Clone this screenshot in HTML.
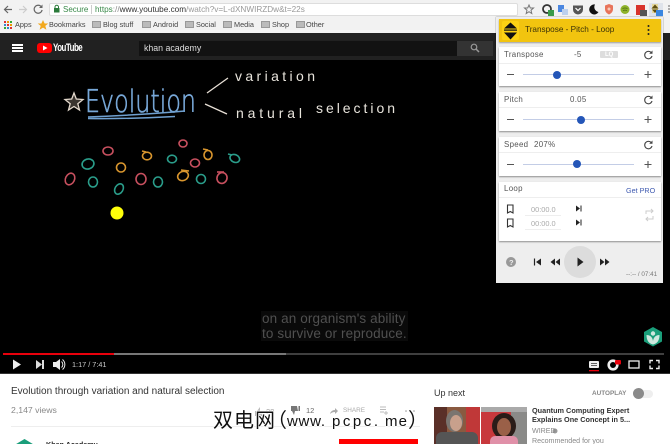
<!DOCTYPE html>
<html>
<head>
<meta charset="utf-8">
<style>
html,body{margin:0;padding:0;background:#fff}
#p{position:relative;width:670px;height:444px;overflow:hidden;font-family:"Liberation Sans","Noto Sans CJK SC",sans-serif;background:#fff}
.a{position:absolute}
.t{position:absolute;white-space:nowrap;line-height:1}
.card{position:absolute;left:499px;width:162px;background:#fff;box-shadow:0 1px 1.5px rgba(0,0,0,.4)}
.div{position:absolute;left:499px;width:162px;height:1px;background:#eee}
.lbl{position:absolute;white-space:nowrap;line-height:1;font-size:7.9px;color:#555;letter-spacing:.3px}
.track{position:absolute;left:523px;width:111px;height:1px;background:#c3cde6}
.thumb{position:absolute;width:8px;height:8px;border-radius:50%;background:#2456b8}
.bm{position:absolute;top:20.500px;font-size:7.300px;color:#444;line-height:1;white-space:nowrap}
.fd{position:absolute;top:21px;width:9px;height:7px;background:#bbb;border:1px solid #999;box-sizing:border-box}
svg{position:absolute;overflow:visible}
</style>
</head>
<body>
<div id="p">
<!-- chrome -->
<div class="a" style="left:0;top:0;width:670px;height:33px;background:#f2f2f2"></div>
<div class="a" style="left:49px;top:3px;width:469px;height:13px;background:#fff;border:1px solid #ddd;box-sizing:border-box;border-radius:2px"></div>
<svg style="left:0;top:0" width="670" height="33" viewBox="0 0 670 33">
<path d="M12 9.500H5M8 6L4.500 9.500 8 13" fill="none" stroke="#666" stroke-width="1.200"/>
<path d="M19 9.500h7M23 6l3.500 3.500L23 13" fill="none" stroke="#ccc" stroke-width="1.200"/>
<path d="M41.500 7a4 4 0 1 0 .6 3" fill="none" stroke="#666" stroke-width="1.200"/><path d="M42.500 4.500v3.500h-3.500z" fill="#666"/>
<rect x="54" y="8" width="5.500" height="4.500" fill="#2a7a3a"/><path d="M55 8V7a1.700 1.700 0 0 1 3.500 0v1" fill="none" stroke="#2a7a3a"/>
<path d="M529 5l1.300 3h3.200l-2.500 2.200.8 3.300-2.800-1.800-2.800 1.800.8-3.300-2.500-2.200h3.200z" fill="none" stroke="#777"/>
<circle cx="547" cy="9" r="4" fill="none" stroke="#333" stroke-width="1.800"/><rect x="548" y="10" width="6" height="6" fill="#3a9a4a"/>
<rect x="558" y="5" width="6" height="7" fill="#4a86e0"/><rect x="562" y="9" width="6" height="6" fill="#bcd0ee"/>
<path d="M573 5.500h10v4a5 5 0 0 1-10 0z" fill="#555"/><path d="M575.500 8l2.500 2.500L580.500 8" fill="none" stroke="#fff" stroke-width="1.200"/>
<path d="M595 4.500a5 5 0 1 0 3.500 7.500 5 5 0 0 1-3.500-7.500z" fill="#111"/>
<path d="M605 5.500l4-1.500 4 1.500v3.500c0 3-2 4.500-4 5.500-2-1-4-2.500-4-5.500z" fill="#e8745a"/><circle cx="609" cy="9" r="1.500" fill="#f6c8b8"/>
<circle cx="625" cy="9.500" r="4.500" fill="#8fb32a"/><path d="M622.500 8.500q2.500-1 5 0M623 10.500q2-.7 4 0" stroke="#4a6a10" fill="none" stroke-width=".7"/>
<rect x="636" y="5" width="9" height="5" fill="#d8332a"/><rect x="636" y="10" width="4" height="5" fill="#d8332a"/><rect x="640" y="10" width="7" height="6" fill="#555"/>
<rect x="649" y="3" width="14" height="14" fill="#dfe3ea"/><path d="M655 4.500l3.500 4h-7zM655 13l3-3.500h-6z" fill="#111"/><rect x="652" y="4" width="6" height="9" fill="#f2c40f" opacity=".35"/><rect x="656" y="10" width="7" height="6" fill="#3a86e0"/>
<path d="M668 6h2M668 9h2M668 12h2" stroke="#666"/>
<g><rect x="4" y="21" width="2" height="2" fill="#d33"/><rect x="7" y="21" width="2" height="2" fill="#e90"/><rect x="10" y="21" width="2" height="2" fill="#3a3"/><rect x="4" y="24" width="2" height="2" fill="#38c"/><rect x="7" y="24" width="2" height="2" fill="#d33"/><rect x="10" y="24" width="2" height="2" fill="#e90"/><rect x="4" y="27" width="2" height="2" fill="#3a3"/><rect x="7" y="27" width="2" height="2" fill="#38c"/><rect x="10" y="27" width="2" height="2" fill="#d33"/></g>
<path d="M43 20l1.600 3.500h3.700l-3 2.400 1.100 3.800-3.400-2.100-3.400 2.100 1.100-3.800-3-2.400h3.700z" fill="#f2a81d"/>
</svg>
<div class="t" style="left:63px;top:5.500px;font-size:8px;color:#3a8a4a">Secure</div>
<div class="a" style="left:91px;top:5px;width:1px;height:9px;background:#ccc"></div>
<div class="t" style="left:95px;top:5.500px;font-size:8.200px;color:#999"><span style="color:#3a8a4a">https</span><span style="color:#888">://</span><span style="color:#333">www.youtube.com</span>/watch?v=L-dXNWIRZDw&amp;t=22s</div>
<div class="bm" style="left:15px">Apps</div>
<div class="bm" style="left:49px">Bookmarks</div>
<div class="fd" style="left:92px"></div><div class="bm" style="left:103px">Blog stuff</div>
<div class="fd" style="left:142px"></div><div class="bm" style="left:153px">Android</div>
<div class="fd" style="left:185px"></div><div class="bm" style="left:196px">Social</div>
<div class="fd" style="left:223px"></div><div class="bm" style="left:234px">Media</div>
<div class="fd" style="left:261px"></div><div class="bm" style="left:272px">Shop</div>
<div class="fd" style="left:296px"></div><div class="bm" style="left:306px">Other</div>

<!-- masthead -->
<div class="a" style="left:0;top:33px;width:670px;height:27px;background:#212121"></div>
<div class="a" style="left:12px;top:44px;width:11px;height:8px;background:linear-gradient(#fff 0 2px,transparent 2px 3px,#fff 3px 5px,transparent 5px 6px,#fff 6px 8px)"></div>
<div class="a" style="left:37px;top:43px;width:15px;height:10px;background:#f00;border-radius:3px"></div>
<svg style="left:0;top:0" width="60" height="60"><path d="M43 45.500l4.500 2.500-4.500 2.500z" fill="#fff"/></svg>
<div class="t" style="left:53px;top:43px;font-size:11px;font-weight:bold;color:#fff;letter-spacing:-.7px;transform-origin:left;transform:scaleX(.72)">YouTube</div>
<div class="a" style="left:139px;top:41px;width:318px;height:15px;background:#121212"></div>
<div class="t" style="left:144px;top:44px;font-size:8.800px;color:#ddd">khan academy</div>
<div class="a" style="left:457px;top:41px;width:36px;height:15px;background:#333"></div>
<svg style="left:0;top:0" width="670" height="60"><circle cx="474" cy="47" r="2.800" fill="none" stroke="#999" stroke-width="1.200"/><path d="M476 49l3 3" stroke="#999" stroke-width="1.500"/></svg>

<!-- video -->
<div class="a" style="left:0;top:60px;width:670px;height:314px;background:#000"></div>
<svg style="left:0;top:0" width="670" height="444" viewBox="0 0 670 444">
<path d="M74 93l2.300 6 6.700.500-5.200 4.200 1.700 6.300-5.500-3.500-5.500 3.500 1.700-6.300-5.200-4.200 6.700-.500z" fill="#3a3530" stroke="#e3d8cc" stroke-width="1.300"/>
<text x="85" y="112" font-family="'DejaVu Sans',sans-serif" font-size="31" textLength="111" lengthAdjust="spacingAndGlyphs" fill="#78a8d8" stroke="#78a8d8" stroke-width=".6" font-weight="200">Evolution</text>
<path d="M88 117Q140 115 185 111" stroke="#6fa0d0" stroke-width="1.500" fill="none"/>
<path d="M88 118.500Q130 119 175 116.500" stroke="#6fa0d0" stroke-width="1.500" fill="none"/>
<path d="M207 93L228 78M205 104L227 114" stroke="#e8e0d6" stroke-width="1.300" fill="none"/>
<text x="235" y="81" font-family="'Liberation Sans',sans-serif" font-size="14" textLength="80" lengthAdjust="spacing" fill="#e8e4dc">variation</text>
<text x="236" y="118" font-family="'Liberation Sans',sans-serif" font-size="14" textLength="66" lengthAdjust="spacing" fill="#e8e4dc">natural</text>
<text x="316" y="113" font-family="'Liberation Sans',sans-serif" font-size="14" textLength="79" lengthAdjust="spacing" fill="#e8e4dc">selection</text>
<g fill="none" stroke-width="1.600">
<g stroke="#c8505f">
<ellipse cx="108" cy="151" rx="5" ry="4"/>
<ellipse cx="70" cy="179" rx="4.500" ry="6" transform="rotate(25 70 179)"/>
<ellipse cx="183" cy="143.500" rx="4" ry="3.500"/>
<ellipse cx="195" cy="163" rx="4.500" ry="4"/>
<ellipse cx="141" cy="179" rx="5" ry="5.500"/>
<ellipse cx="222" cy="178" rx="5" ry="5.500" transform="rotate(20 222 178)"/><path d="M217 172l7 0"/>
</g>
<g stroke="#2a9d8a">
<ellipse cx="88" cy="164" rx="6" ry="5" transform="rotate(-15 88 164)"/>
<ellipse cx="93" cy="182" rx="4.500" ry="5"/>
<ellipse cx="119" cy="189" rx="4" ry="5.500" transform="rotate(30 119 189)"/>
<ellipse cx="172" cy="159" rx="4.500" ry="3.800"/>
<ellipse cx="235" cy="158.500" rx="5" ry="3.800" transform="rotate(25 235 158)"/><path d="M228 154l4 1"/>
<ellipse cx="158" cy="182" rx="4.500" ry="5"/>
<ellipse cx="201" cy="179" rx="4.500" ry="4.500"/>
</g>
<g stroke="#d9962e">
<ellipse cx="121" cy="167.500" rx="4.500" ry="4.500"/>
<ellipse cx="147" cy="156" rx="4.500" ry="3.800"/><path d="M142 151l4 1"/>
<ellipse cx="183" cy="176" rx="5.500" ry="4.500" transform="rotate(-25 183 176)"/><path d="M181 170l8 1"/>
<ellipse cx="208" cy="155" rx="4" ry="4.500"/><path d="M203 149l5 1"/>
</g>
</g>
<circle cx="117" cy="213" r="6.500" fill="#ffff0a"/>
<path d="M653 327l9 5v9.500l-9 5-9-5v-9.500z" fill="#1a9e7a"/>
<circle cx="653" cy="333.500" r="2.200" fill="#cfe8df"/><path d="M646.500 335q5.500 0 6.500 6q1-6 6.500-6q0 8-6.500 9.500q-6.500-1.500-6.500-9.500z" fill="#cfe8df"/>
</svg>
<div class="a" style="left:261px;top:311px;width:147px;height:30px;background:#0a0a0a"></div>
<div class="t" style="left:262px;top:311.500px;font-size:13.500px;color:#505050;letter-spacing:.12px">on an organism's ability</div>
<div class="t" style="left:262px;top:326.500px;font-size:13.500px;color:#505050;letter-spacing:.12px">to survive or reproduce.</div>

<!-- controls -->
<div class="a" style="left:3px;top:353px;width:661px;height:2px;background:#3f3f3f"></div>
<div class="a" style="left:3px;top:353px;width:283px;height:2px;background:#777"></div>
<div class="a" style="left:3px;top:353px;width:111px;height:2px;background:#e8000c"></div>
<svg style="left:0;top:350px" width="670" height="30" viewBox="0 350 670 30">
<path d="M13 359.500l8 5-8 5z" fill="#eee"/>
<path d="M36 360l6 4.500-6 4.500z" fill="#ddd"/><rect x="42" y="360" width="2" height="9" fill="#ddd"/>
<path d="M53 362h3l4-3v11l-4-3h-3z" fill="#eee"/><path d="M61.500 361.500a4 4 0 0 1 0 6M62.500 359.500a6.500 6.500 0 0 1 0 10" fill="none" stroke="#eee"/>
<rect x="589" y="361" width="10" height="7" rx="1" fill="#eee"/><path d="M591 363.500h6M591 365.500h6" stroke="#333" stroke-width=".8"/><rect x="589" y="370" width="10" height="1.300" fill="#e8000c"/>
<circle cx="613" cy="365" r="4.300" fill="none" stroke="#eee" stroke-width="2.600"/><rect x="615" y="360" width="6" height="4.500" rx="1" fill="#e8000c"/>
<rect x="629" y="361" width="10" height="7" fill="none" stroke="#eee" stroke-width="1.300"/>
<path d="M650 363.500v-3h3M656 360.500h3v3M659 365.500v3h-3M653 368.500h-3v-3" fill="none" stroke="#eee" stroke-width="1.400"/>
</svg>
<div class="t" style="left:72px;top:360.500px;font-size:7.300px;color:#ccc">1:17 / 7:41</div>
<div class="a" style="left:0;top:373px;width:670px;height:1px;background:#333"></div>

<!-- panel -->
<div class="a" style="left:496px;top:17px;width:167px;height:266px;background:#eee;box-shadow:0 0 1px rgba(0,0,0,.6)"></div>
<div class="a" style="left:499px;top:19px;width:162px;height:23px;background:#f2c40f;box-shadow:0 1px 1.500px rgba(0,0,0,.35)"></div>
<div class="a" style="left:502px;top:21px;width:17px;height:19px;background:#fcd214;border-radius:2px"></div>
<svg style="left:0;top:0" width="670" height="60"><path d="M510.500 22.500l6.500 6h-13zM510.500 39.500l6.500-7h-13z" fill="#111"/><rect x="504" y="29.500" width="13" height="1.200" fill="#111"/></svg>
<div class="t" style="left:525px;top:25.500px;font-size:8.200px;color:#3b3208">Transpose - Pitch - Loop</div>
<svg style="left:0;top:0" width="670" height="60"><circle cx="648.500" cy="26" r="1" fill="#222"/><circle cx="648.500" cy="30" r="1" fill="#222"/><circle cx="648.500" cy="34" r="1" fill="#222"/></svg>

<div class="card" style="top:47px;height:39px"></div><div class="div" style="top:63px"></div>
<div class="card" style="top:92px;height:39px"></div><div class="div" style="top:107px"></div>
<div class="card" style="top:137px;height:39px"></div><div class="div" style="top:152px"></div>
<div class="card" style="top:182px;height:59px"></div><div class="div" style="top:197px"></div>

<div class="lbl" style="left:504px;top:51px">Transpose</div>
<div class="lbl" style="left:574px;top:51px">-5</div>
<div class="a" style="left:600px;top:51px;width:18px;height:7px;background:#ddd;border-radius:1px"></div>
<div class="t" style="left:605px;top:52px;font-size:6px;color:#fff;font-weight:bold">LQ</div>
<div class="lbl" style="left:504px;top:95.500px">Pitch</div>
<div class="lbl" style="left:570px;top:95.500px">0.05</div>
<div class="lbl" style="left:504px;top:140.500px">Speed</div>
<div class="lbl" style="left:534px;top:140.500px">207%</div>

<div class="track" style="top:74px"></div><div class="thumb" style="left:553px;top:70.500px"></div>
<div class="track" style="top:119px"></div><div class="thumb" style="left:577px;top:115.500px"></div>
<div class="track" style="top:164px"></div><div class="thumb" style="left:573px;top:160px"></div>

<svg style="left:0;top:0" width="670" height="290" viewBox="0 0 670 290">
<g stroke="#555" stroke-width="1.100" fill="none">
<path d="M507 74.500h7M507 119.500h7M507 164.500h7"/>
<path d="M644.500 74.500h7M648 71v7M644.500 119.500h7M648 116v7M644.500 164.500h7M648 161v7"/>
</g>
<g fill="none" stroke="#444" stroke-width="1.100">
<path d="M651.500 53a3.700 3.700 0 1 0 .5 3"/><path d="M651.500 98a3.700 3.700 0 1 0 .5 3"/><path d="M651.500 143a3.700 3.700 0 1 0 .5 3"/>
</g>
<path d="M652.500 50.500v3.300h-3.300zM652.500 95.500v3.300h-3.300zM652.500 140.500v3.300h-3.300z" fill="#444"/>
<g fill="none" stroke="#333" stroke-width="1.100">
<path d="M507.500 205h5.500v8l-2.750-1.500-2.750 1.500z"/><path d="M507.500 219h5.500v8l-2.750-1.500-2.750 1.500z"/>
</g>
<path d="M576 205.500l4 3-4 3zM576 219.500l4 3-4 3z" fill="#222"/><path d="M581 205.500v6M581 219.500v6" stroke="#222"/>
<path d="M646 214v-3h7M651 209l2 2-2 2M653 216v3h-7M648 217l-2 2 2 2" fill="none" stroke="#ccc" stroke-width="1"/>
<circle cx="511" cy="262" r="5" fill="#999"/>
<circle cx="580" cy="262" r="16" fill="#dcdcdc"/>
<path d="M534.500 258.500v7" stroke="#222" stroke-width="1.200"/><path d="M541 258.500l-5 3.500 5 3.500z" fill="#222"/>
<path d="M555 258.500l-4.500 3.500 4.500 3.500zM560 258.500l-4.500 3.500 4.500 3.500z" fill="#222"/>
<path d="M577.500 257.500l6 4.500-6 4.500z" fill="#222"/>
<path d="M600 258.500l4.500 3.500-4.500 3.500zM605 258.500l4.500 3.500-4.500 3.500z" fill="#222"/>
</svg>
<div class="t" style="left:509px;top:258.500px;font-size:7.500px;color:#eee;font-weight:bold">?</div>
<div class="lbl" style="left:504px;top:185px">Loop</div>
<div class="t" style="left:626px;top:186.500px;font-size:7.200px;color:#3f5ab0">Get PRO</div>
<div class="t" style="left:531px;top:205.500px;font-size:7.400px;color:#aaa">00:00.0</div>
<div class="t" style="left:531px;top:219.500px;font-size:7.400px;color:#aaa">00:00.0</div>
<div class="a" style="left:525px;top:215px;width:36px;height:1px;background:#eee"></div>
<div class="a" style="left:525px;top:229px;width:36px;height:1px;background:#eee"></div>
<div class="t" style="left:626px;top:272px;font-size:6.300px;color:#777">--:-- / 07:41</div>

<!-- below -->
<div class="t" style="left:11px;top:387px;font-size:10px;color:#333">Evolution through variation and natural selection</div>
<div class="t" style="left:11px;top:405.500px;font-size:8.700px;color:#888">2,147 views</div>
<div class="a" style="left:11px;top:426px;width:409px;height:1px;background:#eee"></div>
<svg style="left:0;top:400px" width="670" height="44" viewBox="0 400 670 44">
<path d="M255 416v-5h2l3-4v4h4l-1 5z" fill="#bbb"/>
<path d="M291 406h6l1 5h-3l-1 4-2-4h-1z" fill="#777"/><rect x="298.500" y="406" width="1.500" height="5" fill="#777"/>
<path d="M338 411l-3-3v2q-4 0-5 4q2-2 5-2v2z" fill="#aaa"/>
<path d="M380 407h6M380 409.500h6M380 412h4M386 411v4M384 413h4" stroke="#bbb" stroke-width=".9"/>
<circle cx="406" cy="411" r=".8" fill="#999"/><circle cx="410" cy="411" r=".8" fill="#999"/><circle cx="414" cy="411" r=".8" fill="#999"/>
<path d="M24.500 439l10 6v4h-20v-4z" fill="#1a9e7a"/><path d="M22 444h5v2h-5z" fill="#cfe8df"/>
<circle cx="555" cy="431" r="2.500" fill="#999"/>
</svg>
<div class="t" style="left:266px;top:408px;font-size:7.500px;color:#999">28</div>
<div class="t" style="left:306px;top:407px;font-size:7.500px;color:#666">12</div>
<div class="t" style="left:343px;top:407.500px;font-size:6.400px;color:#aaa">SHARE</div>
<div class="t" style="left:46px;top:440.500px;font-size:7.200px;font-weight:bold;color:#222">Khan Academy</div>
<div class="a" style="left:339px;top:439px;width:79px;height:5px;background:#f00"></div>
<svg style="left:0;top:400px" width="670" height="44" viewBox="0 400 670 44">
<g fill="#111" stroke="#fff" stroke-width="1.500" paint-order="stroke">
<text x="213" y="427" font-family="'WenQuanYi Zen Hei','Noto Sans CJK SC',sans-serif" font-size="20" textLength="62" lengthAdjust="spacing">双电网</text>
<text x="267" y="427" font-family="'WenQuanYi Zen Hei','Noto Sans CJK SC',sans-serif" font-size="20">（</text>
<text x="287" y="426" font-family="'Liberation Sans',sans-serif" font-size="15" textLength="38" lengthAdjust="spacing">www.</text>
<text x="332" y="426" font-family="'Liberation Sans',sans-serif" font-size="15" textLength="46" lengthAdjust="spacing">pcpc.</text>
<text x="385" y="426" font-family="'Liberation Sans',sans-serif" font-size="15" textLength="22" lengthAdjust="spacing">me</text>
<text x="408" y="427" font-family="'WenQuanYi Zen Hei','Noto Sans CJK SC',sans-serif" font-size="20">）</text>
</g>
</svg>

<div class="t" style="left:434px;top:389px;font-size:9px;color:#333">Up next</div>
<div class="t" style="left:592px;top:391px;font-size:6.400px;font-weight:bold;color:#888">AUTOPLAY</div>
<div class="a" style="left:636px;top:390px;width:17px;height:8px;border-radius:4px;background:#eee"></div>
<div class="a" style="left:632.500px;top:388px;width:11px;height:11px;border-radius:50%;background:#8a8a8a"></div>

<div class="a" style="left:434px;top:407px;width:46px;height:37px;background:#a85040;overflow:hidden">
<div class="a" style="left:0;top:0;width:46px;height:37px;background:linear-gradient(90deg,#5a3028 0 28%,#8a5a40 28% 70%,#c03838 70%)"></div>
<div class="a" style="left:12px;top:3px;width:17px;height:22px;border-radius:50%;background:#7a7570"></div>
<div class="a" style="left:16px;top:8px;width:12px;height:16px;border-radius:50%;background:#c8a08c"></div>
<div class="a" style="left:2px;top:25px;width:42px;height:14px;background:#555;border-radius:6px 6px 0 0"></div>
</div>
<div class="a" style="left:481px;top:407px;width:46px;height:37px;background:#c8383c;overflow:hidden">
<div class="a" style="left:30px;top:0;width:16px;height:37px;background:#8a8a88"></div>
<div class="a" style="left:0;top:0;width:46px;height:5px;background:#aaa"></div>
<div class="a" style="left:11px;top:6px;width:24px;height:26px;border-radius:50%;background:#2a1c18"></div>
<div class="a" style="left:16px;top:11px;width:14px;height:18px;border-radius:50%;background:#9a6048"></div>
<div class="a" style="left:9px;top:29px;width:28px;height:10px;background:#e090a8;border-radius:5px 5px 0 0"></div>
</div>
<div class="t" style="left:532px;top:407px;font-size:7.300px;font-weight:bold;color:#333">Quantum Computing Expert</div>
<div class="t" style="left:532px;top:416px;font-size:7.300px;font-weight:bold;color:#333">Explains One Concept in 5...</div>
<div class="t" style="left:532px;top:428px;font-size:7.100px;color:#888">WIRED</div>
<div class="t" style="left:532px;top:437.500px;font-size:7.100px;color:#888">Recommended for you</div>
</div>
</body>
</html>
